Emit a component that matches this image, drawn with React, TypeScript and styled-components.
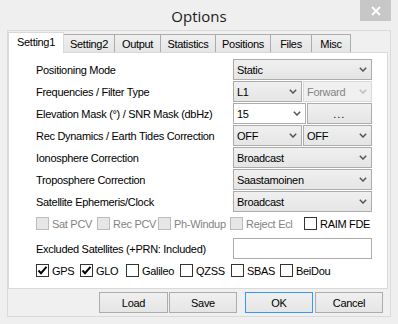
import React from 'react';
import styled, { createGlobalStyle } from 'styled-components';

const GlobalStyle = createGlobalStyle`
  html, body {
    margin: 0;
    padding: 0;
    background: #efefef;
  }
  body {
    font-family: "Liberation Sans", Arial, sans-serif;
    font-size: 11px;
    letter-spacing: -0.3px;
    color: #000;
  }
`;

const Window = styled.div`
  width: 398px;
  height: 324px;
  box-sizing: border-box;
  padding: 0 7px 7px 7px;
  display: flex;
  flex-direction: column;
  background: #efefef;
`;

const TitleBar = styled.div`
  height: 30px;
  display: grid;
  grid-template-columns: 1fr auto 1fr;
`;

const Title = styled.div`
  grid-column: 2;
  align-self: center;
  font-family: "Open Sans", "Noto Sans", sans-serif;
  font-size: 15px;
  letter-spacing: 0;
  color: #1a1a1a;
  padding-top: 1px;
`;

const CloseButton = styled.div`
  grid-column: 3;
  justify-self: end;
  align-self: start;
  width: 31px;
  height: 21px;
  background: #c7c7c7;
  display: flex;
  align-items: center;
  justify-content: center;
`;

const Client = styled.div`
  flex: 1;
  display: flex;
  flex-direction: column;
  border: 1px solid #dadada;
  background: #f0f0f0;
  padding-top: 1px;
`;

const TabRow = styled.div`
  height: 20px;
  display: flex;
  align-items: flex-end;
`;

const Tab = styled.div<{ $w: number; $active?: boolean }>`
  position: relative;
  box-sizing: border-box;
  width: ${(p) => p.$w}px;
  height: ${(p) => (p.$active ? 21 : 18)}px;
  margin-bottom: ${(p) => (p.$active ? -1 : 0)}px;
  margin-left: -1px;
  &:first-child {
    margin-left: 0;
  }
  padding-bottom: ${(p) => (p.$active ? 3 : 0)}px;
  z-index: ${(p) => (p.$active ? 2 : 1)};
  border: 1px solid ${(p) => (p.$active ? '#d9d9d9' : '#acacac')};
  border-bottom: none;
  background: ${(p) => (p.$active ? '#fff' : 'linear-gradient(#f0f0f0, #e5e5e5)')};
  display: flex;
  align-items: center;
  justify-content: center;
`;

const Panel = styled.div`
  position: relative;
  z-index: 1;
  height: 237px;
  box-sizing: border-box;
  margin-right: 2px;
  background: #fff;
  border: 1px solid #d9d9d9;
  padding: 6px 15px 0 27px;
  display: flex;
  flex-direction: column;
  gap: 1px;
`;

const Row = styled.div<{ $top?: number }>`
  height: 21px;
  display: flex;
  align-items: center;
  margin-top: ${(p) => p.$top || 0}px;
`;

const Label = styled.div`
  flex: 1;
  white-space: nowrap;
`;

const Controls = styled.div`
  width: 139px;
  height: 21px;
  display: flex;
  gap: 1px;
`;

const Combo = styled.div<{ $disabled?: boolean; $edit?: boolean }>`
  flex: 1;
  box-sizing: border-box;
  height: 21px;
  border: 1px solid ${(p) => (p.$disabled ? '#d9d9d9' : '#acacac')};
  background: ${(p) =>
    p.$edit ? '#fff' : p.$disabled ? '#f0f0f0' : 'linear-gradient(#f0f0f0, #e5e5e5)'};
  color: ${(p) => (p.$disabled ? '#838383' : '#000')};
  display: flex;
  align-items: center;
  justify-content: space-between;
  padding: 0 4px 0 3px;
`;

const Arrow = ({ disabled }: { disabled?: boolean }) => (
  <svg width="8" height="5" viewBox="0 0 8 5">
    <path d="M0.8 0.8 L4 4 L7.2 0.8" fill="none" stroke={disabled ? '#bcbcbc' : '#555'} strokeWidth="1.5" />
  </svg>
);

const DotsButton = styled.div`
  flex: 1;
  box-sizing: border-box;
  height: 21px;
  border: 1px solid #acacac;
  background: linear-gradient(#f0f0f0, #e5e5e5);
  display: flex;
  align-items: center;
  justify-content: center;
  letter-spacing: 1px;
`;

const TextField = styled.div`
  width: 139px;
  height: 21px;
  box-sizing: border-box;
  border: 1px solid #acacac;
  background: #fff;
`;

const CheckItem = styled.div<{ $w?: number; $disabled?: boolean }>`
  width: ${(p) => (p.$w ? `${p.$w}px` : 'auto')};
  display: flex;
  align-items: center;
  gap: 3px;
  color: ${(p) => (p.$disabled ? '#838383' : '#000')};
  white-space: nowrap;
`;

const Box = styled.div<{ $disabled?: boolean }>`
  width: 13px;
  height: 13px;
  box-sizing: border-box;
  border: 1px solid ${(p) => (p.$disabled ? '#bcbcbc' : '#333')};
  background: ${(p) => (p.$disabled ? '#e6e6e6' : '#fff')};
  display: flex;
  align-items: center;
  justify-content: center;
`;

const Check = ({ label, w, checked, disabled }: { label: string; w?: number; checked?: boolean; disabled?: boolean }) => (
  <CheckItem $w={w} $disabled={disabled}>
    <Box $disabled={disabled}>
      {checked && (
        <svg width="11" height="11" viewBox="0 0 11 11">
          <path d="M1.5 5.5 L4 8.2 L9.5 1.8" fill="none" stroke="#000" strokeWidth="2" />
        </svg>
      )}
    </Box>
    {label}
  </CheckItem>
);

const ButtonRow = styled.div`
  flex: 1;
  display: flex;
  align-items: center;
  justify-content: flex-end;
  padding-right: 7px;
`;

const Button = styled.div<{ $left?: number; $w?: number; $default?: boolean }>`
  width: ${(p) => p.$w || 68}px;
  height: 21px;
  box-sizing: border-box;
  margin-left: ${(p) => p.$left || 0}px;
  border: 1px solid ${(p) => (p.$default ? '#3399ff' : '#acacac')};
  background: linear-gradient(#f0f0f0, #e5e5e5);
  display: flex;
  align-items: center;
  justify-content: center;
`;

const tabs: [string, number][] = [
  ['Setting1', 56],
  ['Setting2', 52],
  ['Output', 47],
  ['Statistics', 56],
  ['Positions', 56],
  ['Files', 42],
  ['Misc', 40],
];

export default function App() {
  return (
    <>
      <GlobalStyle />
      <Window>
        <TitleBar>
          <Title>Options</Title>
          <CloseButton>
            <svg width="10" height="10" viewBox="0 0 10 10">
              <path d="M1 1 L9 9 M9 1 L1 9" stroke="#fff" strokeWidth="1.8" />
            </svg>
          </CloseButton>
        </TitleBar>
        <Client>
          <TabRow>
            {tabs.map(([name, w], i) => (
              <Tab key={name} $w={w} $active={i === 0}>
                {name}
              </Tab>
            ))}
          </TabRow>
          <Panel>
            <Row>
              <Label>Positioning Mode</Label>
              <Controls>
                <Combo>Static<Arrow /></Combo>
              </Controls>
            </Row>
            <Row>
              <Label>Frequencies / Filter Type</Label>
              <Controls>
                <Combo>L1<Arrow /></Combo>
                <Combo $disabled>Forward<Arrow disabled /></Combo>
              </Controls>
            </Row>
            <Row>
              <Label>Elevation Mask (°) / SNR Mask (dbHz)</Label>
              <Controls>
                <Combo $edit>15<Arrow /></Combo>
                <DotsButton>...</DotsButton>
              </Controls>
            </Row>
            <Row>
              <Label>Rec Dynamics / Earth Tides Correction</Label>
              <Controls>
                <Combo>OFF<Arrow /></Combo>
                <Combo>OFF<Arrow /></Combo>
              </Controls>
            </Row>
            <Row>
              <Label>Ionosphere Correction</Label>
              <Controls>
                <Combo>Broadcast<Arrow /></Combo>
              </Controls>
            </Row>
            <Row>
              <Label>Troposphere Correction</Label>
              <Controls>
                <Combo>Saastamoinen<Arrow /></Combo>
              </Controls>
            </Row>
            <Row>
              <Label>Satellite Ephemeris/Clock</Label>
              <Controls>
                <Combo>Broadcast<Arrow /></Combo>
              </Controls>
            </Row>
            <Row>
              <Check label="Sat PCV" w={61} disabled />
              <Check label="Rec PCV" w={61} disabled />
              <Check label="Ph-Windup" w={72} disabled />
              <Check label="Reject Ecl" w={74} disabled />
              <Check label="RAIM FDE" />
            </Row>
            <Row $top={3}>
              <Label>Excluded Satellites (+PRN: Included)</Label>
              <TextField />
            </Row>
            <Row>
              <Check label="GPS" w={44} checked />
              <Check label="GLO" w={46} checked />
              <Check label="Galileo" w={54} />
              <Check label="QZSS" w={51} />
              <Check label="SBAS" w={49} />
              <Check label="BeiDou" />
            </Row>
          </Panel>
          <ButtonRow>
            <Button $w={69}>Load</Button>
            <Button $left={1}>Save</Button>
            <Button $left={8} $default>OK</Button>
            <Button $left={2}>Cancel</Button>
          </ButtonRow>
        </Client>
      </Window>
    </>
  );
}
